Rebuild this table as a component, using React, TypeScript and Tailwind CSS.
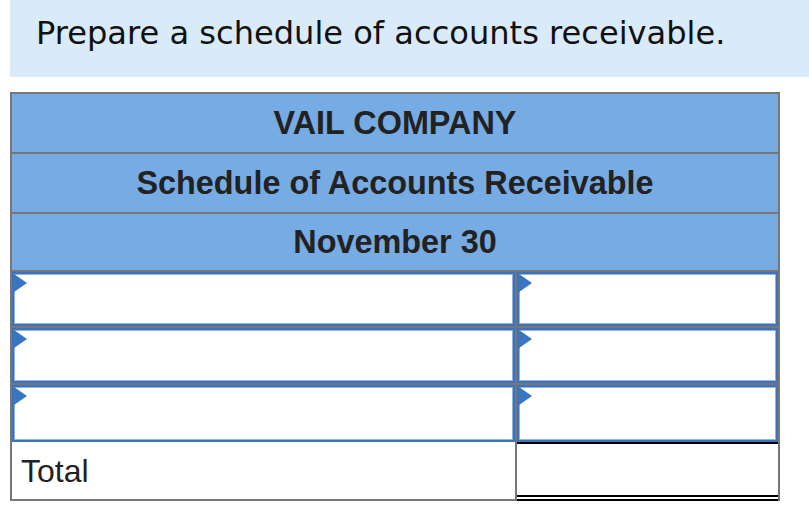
function Marker(): React.ReactElement {
  return (
    <span className="absolute left-0 top-0 h-0 w-0 border-y-[9.5px] border-l-[13px] border-y-transparent border-l-[#3a75bf]" />
  )
}

function InputBox(): React.ReactElement {
  return (
    <div className="relative h-full w-full border-2 border-[#3b74bd] bg-white shadow-[inset_0_0_0_1px_#8fb4e0]">
      <Marker />
    </div>
  )
}

const headers = ['VAIL COMPANY', 'Schedule of Accounts Receivable', 'November 30']
const headerHeights = ['h-[60px]', 'h-[60px]', 'h-[58px]']
const rowHeights = ['h-[56px]', 'h-[57px]', 'h-[57px]']

export default function App(): React.ReactElement {
  return (
    <div className="h-[513px] w-[809px] overflow-hidden bg-white font-['Liberation_Sans',Arial,sans-serif]">
      <div className="ml-[10px] h-[77px] bg-[#d9ebf9] pl-[26px] pt-[15px] font-['DejaVu_Sans',Verdana,sans-serif] text-[32.1px] leading-[37px] text-[#111]">
        Prepare a schedule of accounts receivable.
      </div>

      <div className="ml-[10px] mt-[15px] w-[770px] border-x-2 border-t-2 border-[#777]">
        {headers.map((text, i) => (
          <div
            key={text}
            className={`flex ${headerHeights[i]} items-center justify-center border-b-2 border-[#777] bg-[#77abe3] text-[32.4px] font-bold text-[#222]`}
          >
            {text}
          </div>
        ))}

        {rowHeights.map((h, i) => (
          <div key={i} className={`flex ${h} ${i < 2 ? 'border-b-2 border-[#777]' : ''}`}>
            <div className="w-[503px]">
              <InputBox />
            </div>
            <div className="w-[263px] border-l-2 border-[#777]">
              <InputBox />
            </div>
          </div>
        ))}

        <div className="flex h-[59px]">
          <div className="flex w-[503px] items-center border-b-2 border-[#777] pl-[9px] text-[32px] text-[#222]">
            Total
          </div>
          <div className="w-[263px] border-l-2 border-[#777]">
            <div className="h-full w-full border-t-2 border-b-[6px] border-double border-black border-t-black" />
          </div>
        </div>
      </div>
    </div>
  )
}
